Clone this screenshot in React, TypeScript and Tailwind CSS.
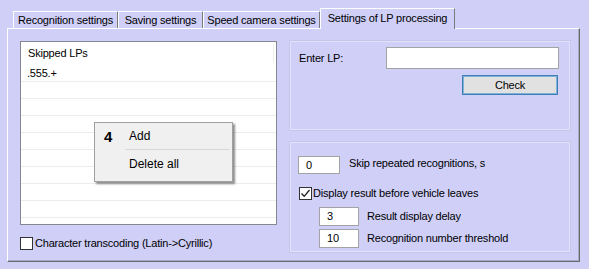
import React from "react";

const TABS = [
  { label: "Recognition settings", w: "w-[105px]" },
  { label: "Saving settings", w: "w-[85px]" },
  { label: "Speed camera settings", w: "w-[117px]" },
];

const Field: React.FC<{ value: string; className: string }> = ({ value, className }) => (
  <div
    className={`bg-white border border-[#a3a3a3] flex items-center pl-[7px] text-black ${className}`}
  >
    {value}
  </div>
);

const CheckBox: React.FC<{ checked?: boolean }> = ({ checked }) => (
  <div className="w-[13px] h-[13px] bg-white border border-[#333] flex items-center justify-center shrink-0">
    {checked && (
      <svg width="11" height="11" viewBox="0 0 11 11">
        <path d="M1.5 5.5 L4.2 8.3 L9.5 2" fill="none" stroke="#222" strokeWidth="1.3" />
      </svg>
    )}
  </div>
);

export default function App() {
  const rows = Array.from({ length: 10 });

  return (
    <div className="w-[589px] h-[269px] bg-[#cfcff8] font-['Liberation_Sans',Arial,sans-serif] text-[11px] tracking-[-0.2px] text-black pt-[8px] pl-[7px] overflow-hidden">
      {/* Tab strip */}
      <div className="flex items-end h-[20px] pl-[6px]">
        {TABS.map((tab) => (
          <div
            key={tab.label}
            className={`${tab.w} h-[17px] border-t border-l border-white border-r border-r-[#7a7a7a] flex items-center justify-center`}
          >
            {tab.label}
          </div>
        ))}
        <div className="w-[135px] h-[21px] -mb-[1px] relative z-10 bg-[#cfcff8] border-t border-l border-white border-r border-r-[#7a7a7a] flex items-center justify-center pb-[2px]">
          Settings of LP processing
        </div>
      </div>

      {/* Panel */}
      <div className="w-[573px] h-[234px] border-t border-l border-white border-r border-b border-r-[#6a6a6a] border-b-[#6a6a6a] shadow-[inset_-1px_-1px_0_#a8a8c8] flex gap-[13px] pl-[12px] pt-[12px]">
        {/* Left column */}
        <div className="flex flex-col gap-[11px] w-[257px]">
          <div className="relative h-[184px] bg-white border border-[#828790]">
            <div className="h-[23px] flex items-center pl-[7px]">
              <span>Skipped LPs</span>
              <div className="ml-auto mr-[2px] w-px h-[18px] bg-[#eeeeee]" />
            </div>
            <div className="h-[159px] overflow-hidden">
              {rows.map((_, i) => (
                <div key={i} className="h-[17px] border-b border-[#ececec] flex items-center pl-[6px]">
                  {i === 0 ? ".555.+" : ""}
                </div>
              ))}
            </div>

            {/* Context menu */}
            <div className="absolute left-[73px] top-[80px] w-[139px] h-[60px] bg-[#f0f0f0] border border-[#a0a0a0] shadow-[2px_2px_2px_rgba(0,0,0,0.45)] flex flex-col tracking-normal">
              <div className="h-[26px] flex items-center">
                <span className="w-[34px] pl-[9px] font-bold text-[15px] leading-none">4</span>
                <span className="text-[12px]">Add</span>
              </div>
              <div className="ml-[30px] mr-[2px] h-px bg-[#d7d7d7]" />
              <div className="h-[28px] flex items-center pl-[34px] text-[12px]">Delete all</div>
            </div>
          </div>
          <div className="flex items-center gap-[2px] h-[14px]">
            <CheckBox />
            <span>Character transcoding (Latin-&gt;Cyrillic)</span>
          </div>
        </div>

        {/* Right column */}
        <div className="flex flex-col gap-[12px] w-[280px]">
          <div className="h-[89px] border border-[#e2e2fc] shadow-[0_0_0_1px_#c6c6ea] pt-[5px] pl-[8px] pr-[10px] flex flex-col gap-[6px]">
            <div className="flex items-center">
              <span className="w-[87px]">Enter LP:</span>
              <div className="w-[173px] h-[22px] bg-white border border-[#a3a3a3]" />
            </div>
            <div className="flex justify-end">
              <button className="w-[96px] h-[20px] bg-[#e1e1e1] border border-[#3d7fb6] shadow-[inset_0_0_0_1px_#7fb0d8] text-[11px] mr-[1px]">
                Check
              </button>
            </div>
          </div>

          <div className="h-[110px] border border-[#e2e2fc] shadow-[0_0_0_1px_#c6c6ea] pt-[13px] pl-[7px] flex flex-col">
            <div className="flex items-start gap-[9px]">
              <Field value="0" className="w-[42px] h-[18px]" />
              <span className="-mt-[1px]">Skip repeated recognitions, s</span>
            </div>
            <div className="flex items-center gap-[1px] mt-[11px] ml-[1px]">
              <CheckBox checked />
              <span>Display result before vehicle leaves</span>
            </div>
            <div className="flex flex-col gap-[3px] mt-[5px] ml-[21px]">
              <div className="flex items-center gap-[8px]">
                <Field value="3" className="w-[40px] h-[19px]" />
                <span>Result display delay</span>
              </div>
              <div className="flex items-center gap-[8px]">
                <Field value="10" className="w-[40px] h-[19px]" />
                <span>Recognition number threshold</span>
              </div>
            </div>
          </div>
        </div>
      </div>
    </div>
  );
}
